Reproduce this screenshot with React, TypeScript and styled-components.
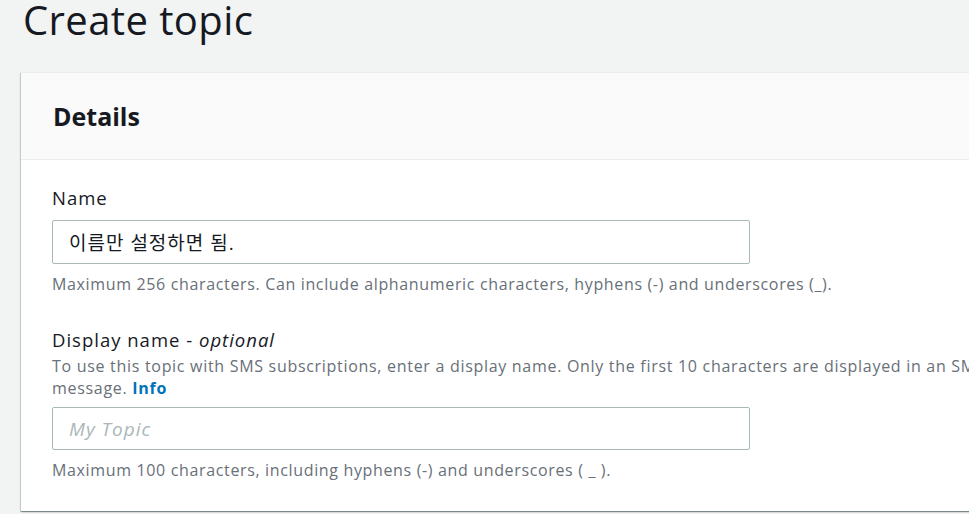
import styled, { createGlobalStyle } from 'styled-components';

const GlobalStyle = createGlobalStyle`
  html, body {
    margin: 0;
    padding: 0;
    background-color: #f2f3f3;
    overflow: hidden;
  }
  body {
    font-family: 'Open Sans', 'Noto Sans CJK KR', sans-serif;
    color: #16191f;
  }
`;

/**
 * SNS 토픽 생성 화면
 * - Details 패널
 */
const App = () => {
  return (
    <>
      <GlobalStyle />
      <Page>
        <Title>Create topic</Title>

        <Card>
          <CardHeader>
            <Heading>Details</Heading>
          </CardHeader>

          <CardBody>
            <Field>
              <Label>Name</Label>
              <Input defaultValue="이름만 설정하면 됨." />
              <Hint>
                Maximum 256 characters. Can include alphanumeric characters, hyphens (-) and
                underscores (_).
              </Hint>
            </Field>

            <Field>
              <Label>
                Display name - <em>optional</em>
              </Label>
              <Description>
                To use this topic with SMS subscriptions, enter a display name. Only the first 10
                characters are displayed in an SMS
                <br />
                message. <InfoLink href="#">Info</InfoLink>
              </Description>
              <Input placeholder="My Topic" $gap={8} />
              <Hint>Maximum 100 characters, including hyphens (-) and underscores ( _ ).</Hint>
            </Field>
          </CardBody>
        </Card>
      </Page>
    </>
  );
};

const Page = styled.div`
  display: flex;
  flex-direction: column;
  padding-left: 21px;
  height: 514px;
`;

const Title = styled.h1`
  flex-shrink: 0;
  margin: 0;
  padding-left: 2px;
  height: 72px;
  font-size: 40px;
  font-weight: 400;
  line-height: 40px;
  letter-spacing: 0.4px;
  color: #16191f;
`;

const Card = styled.section`
  display: flex;
  flex-direction: column;
  width: 1200px;
  background-color: #ffffff;
  border-top: 1px solid #eaeded;
  box-shadow: 0 1px 1px 0 rgba(0, 28, 36, 0.3), 1px 1px 1px 0 rgba(0, 28, 36, 0.15),
    -1px 1px 1px 0 rgba(0, 28, 36, 0.15);
`;

const CardHeader = styled.div`
  display: flex;
  align-items: center;
  height: 86px;
  padding: 0 32px;
  background-color: #fafafa;
  border-bottom: 1px solid #eaeded;
`;

const Heading = styled.h2`
  margin: 0;
  font-size: 25px;
  font-weight: 700;
  line-height: 30px;
  color: #16191f;
`;

const CardBody = styled.div`
  display: flex;
  flex-direction: column;
  gap: 33px;
  padding: 26px 31px 30px;
`;

const Field = styled.div`
  display: flex;
  flex-direction: column;
`;

const Label = styled.label`
  font-size: 18.5px;
  line-height: 24px;
  letter-spacing: 1px;
  color: #16191f;

  em {
    font-style: italic;
  }
`;

const Description = styled.div`
  margin-top: 3px;
  font-size: 16px;
  line-height: 22px;
  letter-spacing: 0.7px;
  color: #687078;
  white-space: nowrap;
`;

const InfoLink = styled.a`
  color: #0073bb;
  font-weight: 700;
  text-decoration: none;
`;

const Input = styled.input<{ $gap?: number }>`
  box-sizing: border-box;
  width: 698px;
  height: ${({ $gap }) => ($gap ? 43 : 44)}px;
  margin-top: ${({ $gap }) => $gap ?? 10}px;
  padding: 0 16px;
  font-family: 'Open Sans', 'Noto Sans CJK KR', sans-serif;
  font-size: 19px;
  letter-spacing: 1px;
  color: #16191f;
  background-color: #ffffff;
  border: 1px solid #aab7b8;
  border-radius: 2px;
  outline: none;

  &::placeholder {
    color: #aab7b8;
    font-style: italic;
  }
`;

const Hint = styled.p`
  margin: 9px 0 0;
  font-size: 16px;
  line-height: 22px;
  letter-spacing: 0.65px;
  color: #687078;
`;

export default App;
